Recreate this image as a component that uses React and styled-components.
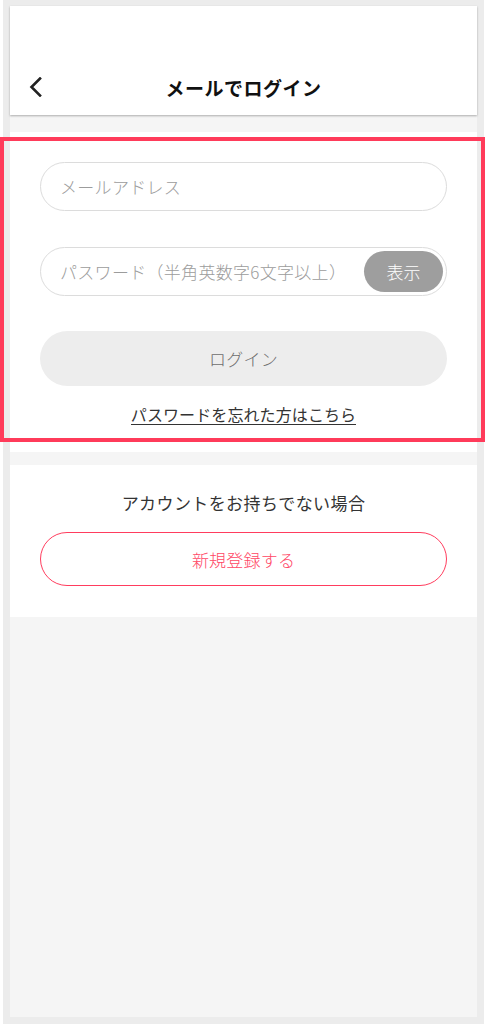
import styled, { createGlobalStyle } from 'styled-components'

const GlobalStyle = createGlobalStyle`
   html, body {
      margin: 0;
      padding: 0;
      background: #ffffff;
   }
   * {
      box-sizing: border-box;
   }
   body {
      font-family: "Noto Sans CJK JP", "Noto Sans", sans-serif;
      font-weight: 300;
   }
`

const Page = styled.div`
   position: relative;
   width: 487px;
   height: 1024px;
   overflow: hidden;
`

// 端末の枠（グレーの縁）
const Frame = styled.div`
   margin-left: 3px;
   width: 481px;
   height: 1024px;
   border: 7px solid #ececec;
   border-top-width: 6px;
   background: #f5f5f5;
   display: flex;
   flex-direction: column;
`

const Header = styled.header`
   height: 109px;
   background: #ffffff;
   display: flex;
   align-items: flex-end;
   box-shadow: 0 1px 2px rgba(0, 0, 0, 0.3);
   position: relative;
   z-index: 1;
`

const HeaderRow = styled.div`
   position: relative;
   width: 100%;
   height: 56px;
   display: flex;
   align-items: center;
   justify-content: center;
`

const BackButton = styled.button`
   position: absolute;
   left: 18px;
   top: 50%;
   transform: translateY(-50%);
   border: none;
   background: none;
   padding: 0;
   width: 16px;
   height: 22px;
   display: flex;
   align-items: center;
   justify-content: center;
`

const Title = styled.h1`
   margin: 0;
   font-size: 19px;
   font-weight: 700;
   color: #111;
   letter-spacing: 0.5px;
`

const Section = styled.section`
   background: #ffffff;
   margin-top: ${(props) => props.gap || '0px'};
   padding: ${(props) => props.pad || '30px 30px 0'};
   height: ${(props) => props.h};
   display: flex;
   flex-direction: column;
   align-items: center;
`

const Field = styled.div`
   width: 100%;
   height: 49px;
   margin-top: ${(props) => props.mt || '0px'};
   border: 1px solid #dcdcdc;
   border-radius: 25px;
   display: flex;
   align-items: center;
   padding: 0 3px 0 19px;
`

const Input = styled.input`
   flex: 1;
   min-width: 0;
   border: none;
   outline: none;
   background: transparent;
   font-family: inherit;
   font-weight: 300;
   font-size: 17px;
   letter-spacing: 0.3px;
   color: #333;
   padding: 0;

   &::placeholder {
      color: #9c9c9c;
   }
`

const ShowButton = styled.button`
   width: 79px;
   height: 41px;
   border: none;
   border-radius: 21px;
   background: #9e9e9e;
   color: #ffffff;
   font-family: inherit;
   font-weight: 300;
   font-size: 17px;
   flex-shrink: 0;
`

const LoginButton = styled.button`
   width: 100%;
   height: 55px;
   margin-top: 35px;
   border: none;
   border-radius: 28px;
   background: #ededed;
   color: #6e6e6e;
   font-family: inherit;
   font-weight: 300;
   font-size: 17px;
   letter-spacing: 0.3px;
`

const ForgotLink = styled.a`
   margin-top: 18px;
   font-size: 16px;
   font-weight: 400;
   line-height: 20px;
   color: #333;
   text-decoration: none;
   border-bottom: 1px solid #333;
   letter-spacing: 0.1px;
`

const Lead = styled.p`
   margin: 0;
   font-size: 17px;
   font-weight: 400;
   line-height: 24px;
   color: #333;
   letter-spacing: 0.4px;
`

const RegisterButton = styled.button`
   width: 100%;
   height: 54px;
   margin-top: 17px;
   border: 1.5px solid #ff3d5e;
   border-radius: 28px;
   background: #ffffff;
   color: #ff4766;
   font-family: inherit;
   font-weight: 300;
   font-size: 17px;
   letter-spacing: 0.2px;
`

// 注目箇所を示す赤枠
const Highlight = styled.div`
   position: absolute;
   left: 0;
   top: 137px;
   width: 485px;
   height: 305px;
   border: 4px solid #ff3b5a;
   pointer-events: none;
`

function App() {
   return (
      <Page>
         <GlobalStyle />
         <Frame>
            <Header>
               <HeaderRow>
                  <BackButton aria-label="戻る">
                     <svg width="14" height="20" viewBox="0 0 14 20">
                        <polyline points="11,1.5 2.5,10 11,18.5" fill="none" stroke="#222" strokeWidth="2.6" strokeLinecap="square" />
                     </svg>
                  </BackButton>
                  <Title>メールでログイン</Title>
               </HeaderRow>
            </Header>

            <Section gap="17px" h="320px">
               <Field>
                  <Input type="email" placeholder="メールアドレス" />
               </Field>
               <Field mt="36px">
                  <Input type="password" placeholder="パスワード（半角英数字6文字以上）" />
                  <ShowButton>表示</ShowButton>
               </Field>
               <LoginButton>ログイン</LoginButton>
               <ForgotLink href="#">パスワードを忘れた方はこちら</ForgotLink>
            </Section>

            <Section gap="13px" pad="26px 30px 0" h="152px">
               <Lead>アカウントをお持ちでない場合</Lead>
               <RegisterButton>新規登録する</RegisterButton>
            </Section>
         </Frame>
         <Highlight />
      </Page>
   )
}

export default App
